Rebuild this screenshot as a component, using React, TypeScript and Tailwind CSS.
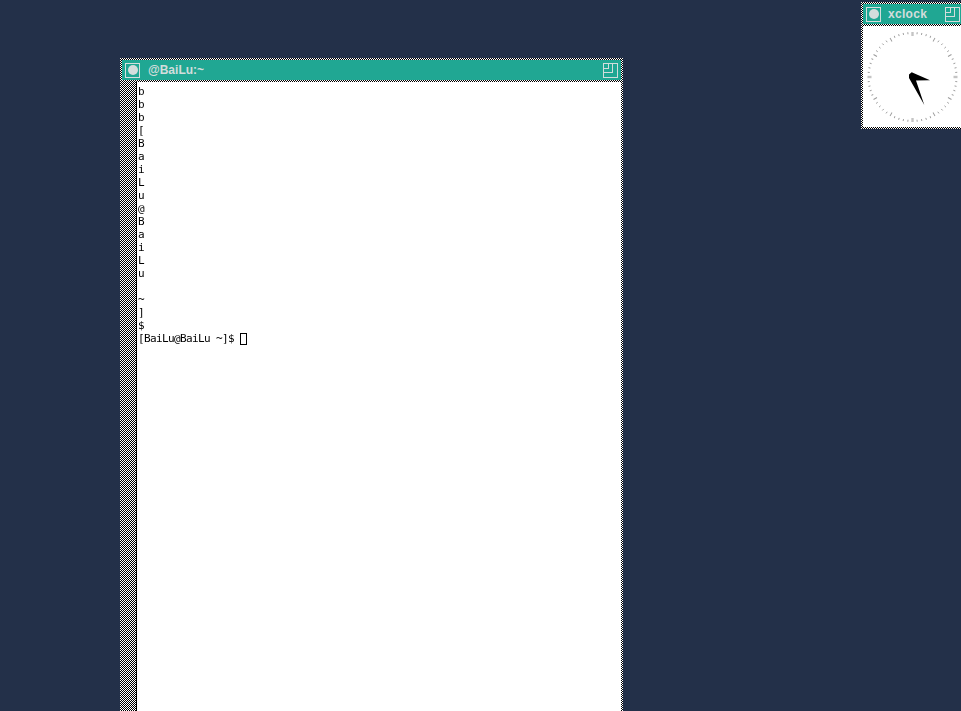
const checker =
  "bg-[repeating-conic-gradient(#000_0_25%,#fff_0_50%)] bg-[length:2px_2px]";

const ticks = Array.from({ length: 60 }, (_, i) => i);

function CloseButton() {
  return (
    <div className="flex h-[15px] w-[15px] shrink-0 items-center justify-center border border-[#d3dddc]">
      <div className="h-[10px] w-[10px] rounded-full bg-[#d3dddc]" />
    </div>
  );
}

function ResizeButton() {
  return (
    <div className="relative h-[15px] w-[15px] shrink-0 border border-[#d3dddc]">
      <div className="h-[9px] w-[9px] border-r border-b border-[#d3dddc]" />
      <div className="absolute top-0 left-0 h-[5px] w-[5px] border-r border-b border-[#d3dddc]" />
    </div>
  );
}

function TitleBar({ title, bold }: { title: string; bold?: boolean }) {
  return (
    <div className="flex h-[20px] shrink-0 items-center justify-between bg-[#20a793] px-[3px]">
      <div className="flex items-center">
        <CloseButton />
        <span
          className={`font-['Liberation_Sans',sans-serif] text-[12px] leading-none font-bold text-[#d3dddc] ${
            bold ? "ml-[7px] tracking-[0.3px]" : "ml-[8px]"
          }`}
        >
          {title}
        </span>
      </div>
      <ResizeButton />
    </div>
  );
}

// the terminal was one column wide, so the first prompt wrapped char by char
const wrapped = "bbb[BaiLu@BaiLu ~]$".split("");

function Terminal() {
  return (
    <div className={`absolute top-[58px] bottom-[-4px] left-[120px] flex w-[503px] flex-col p-[2px] ${checker}`}>
      <TitleBar title="@BaiLu:~" />
      <div className={`h-[2px] shrink-0 ${checker}`} />
      <div className="flex min-h-0 flex-1">
        <div className={`w-[14px] shrink-0 ${checker}`} />
        <div className="w-px shrink-0 bg-black" />
        <div className="flex-1 bg-white pt-[3px] pl-[1px] font-['DejaVu_Sans_Mono',monospace] text-[11px] leading-[13px] tracking-[-0.62px] text-black">
          <div className="will-change-transform">
            {wrapped.map((ch, i) => (
              <div key={i} className="h-[13px]">
                {ch}
              </div>
            ))}
            <div className="flex h-[13px] items-center whitespace-pre">
              <span>{"[BaiLu@BaiLu ~]$ "}</span>
              <span className="h-[12px] w-[7px] border border-black" />
            </div>
          </div>
        </div>
      </div>
    </div>
  );
}

function Clock() {
  return (
    <div className={`absolute top-[2px] left-[861px] flex h-[127px] w-[104px] flex-col p-[2px] ${checker}`}>
      <TitleBar title="xclock" bold />
      <div className={`h-[2px] shrink-0 ${checker}`} />
      <div className="flex-1 bg-white">
        <svg width="100" height="101" viewBox="0 0 100 101">
          <g transform="translate(49.5 51)">
            {ticks.map((i) => {
              const quarter = i % 15 === 0;
              const five = i % 5 === 0;
              return (
                <line
                  key={i}
                  x1="0"
                  y1={-45}
                  x2="0"
                  y2={five ? -41 : -43}
                  stroke={quarter ? "#c4c4c4" : "#9a9a9a"}
                  strokeWidth={quarter ? 2.4 : 0.9}
                  transform={`rotate(${i * 6})`}
                />
              );
            })}
          </g>
          <path d="M48.7 46.3 L67 54.3 L53 54.5 L61.3 79 L46 52 L46 48.5 Z" fill="#000" />
        </svg>
      </div>
    </div>
  );
}

export default function App() {
  return (
    <div className="relative h-[711px] w-[961px] overflow-hidden bg-[#233049]">
      <Terminal />
      <Clock />
    </div>
  );
}
